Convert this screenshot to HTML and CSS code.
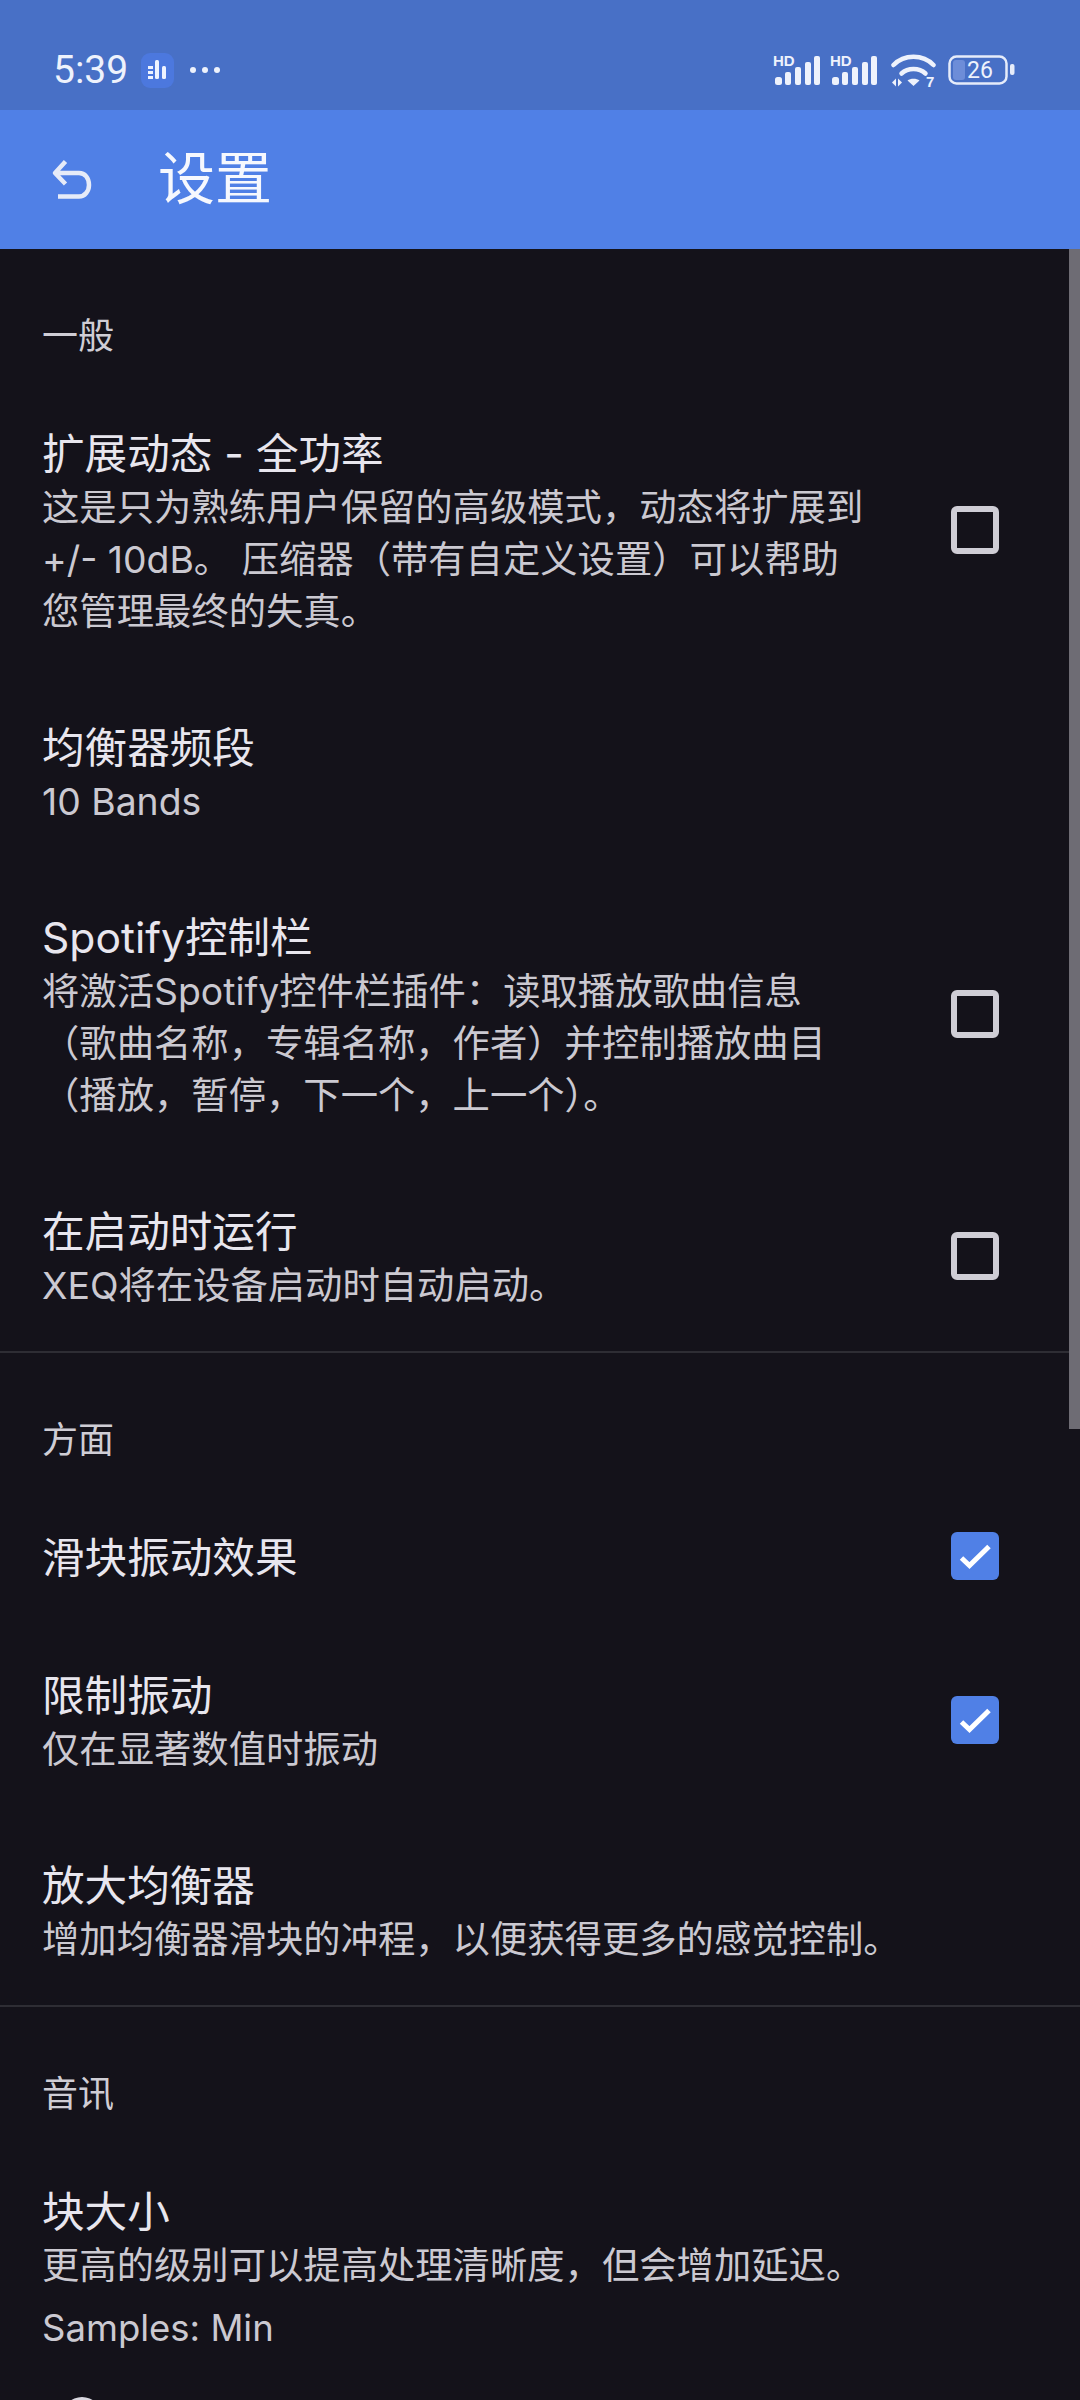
FILE: index.html
```html
<!DOCTYPE html>
<html lang="zh-CN">
<head>
<meta charset="utf-8">
<title>设置</title>
<link rel="stylesheet" href="styles.css">
</head>
<body>
<div class="screen">
  <div class="statusbar">
    <div class="status-left">
      <span class="time">5:39</span>
      <span class="chip">
        <svg width="19" height="21" viewBox="0 0 19 21"><g fill="#eef3ff"><rect x="0" y="6" width="5" height="3"/><rect x="0" y="11" width="5" height="3"/><rect x="0" y="16" width="5" height="3"/><rect x="7" y="0" width="4" height="19" rx="1.5"/><rect x="14" y="6" width="4" height="13" rx="1.5"/></g></svg>
      </span>
      <span class="dots"><i></i><i></i><i></i></span>
    </div>
    <div class="status-right">
      <svg class="signal" width="48" height="36" viewBox="0 -4 48 36"><text x="0" y="11.500" class="hd">HD</text><g fill="#eef2fc"><rect x="2" y="23" width="7" height="8" rx="2.500"/><rect x="12" y="18" width="6" height="13" rx="2"/><rect x="22" y="13" width="6" height="18" rx="2"/><rect x="32" y="8" width="6" height="23" rx="2"/><rect x="41" y="2" width="6" height="29" rx="2"/></g></svg>
      <svg class="signal" width="48" height="36" viewBox="0 -4 48 36"><text x="0" y="11.500" class="hd">HD</text><g fill="#eef2fc"><rect x="2" y="23" width="7" height="8" rx="2.500"/><rect x="12" y="18" width="6" height="13" rx="2"/><rect x="22" y="13" width="6" height="18" rx="2"/><rect x="32" y="8" width="6" height="23" rx="2"/><rect x="41" y="2" width="6" height="29" rx="2"/></g></svg>
      <svg class="wifi" width="46" height="38" viewBox="0 0 46 38"><g fill="none" stroke="#eef2fc" stroke-width="4.500" stroke-linecap="round"><path d="M2.500 11C13 0 32 0 42.500 11"/><path d="M10.500 19.500C17 13.500 28 13.500 34.500 19.500"/></g><path d="M16.500 26.500C19.500 24 25.500 24 28.500 26.500L22.500 32Z" fill="#eef2fc"/><path d="M1 28.500 5 24.500V32.500ZM7 32.500V24.500L11 28.500Z" fill="#eef2fc"/><text x="35" y="33" class="seven">7</text></svg>
      <svg class="battery" width="67" height="30" viewBox="0 0 67 30"><rect x="1.500" y="1.500" width="57" height="27" rx="7" fill="none" stroke="#e6ecfa" stroke-width="2.500"/><rect x="5" y="5" width="12" height="20" rx="3" fill="#6d8dd8"/><rect x="62" y="9" width="4.500" height="11" rx="2" fill="#e6ecfa"/><text x="19" y="23" class="batt">26</text></svg>
    </div>
  </div>
  <header class="appbar">
    <svg class="back" width="42" height="44" viewBox="0 0 42 44"><path d="M6 16H29C35 16 39 21 39 28C39 34 35 39.500 29 39.500H8M15.500 4.500 5 16 15.500 27" fill="none" stroke="#e6ebf8" stroke-width="4.500" stroke-linejoin="round"/></svg>
    <h1 class="page-title">设置</h1>
  </header>
  <main class="list">
    <section class="group">
      <h2 class="group-head">一般</h2>
      <div class="row">
        <div class="row-text">
          <div class="row-title">扩展动态 - 全功率</div>
          <div class="row-desc">这是只为熟练用户保留的高级模式，动态将扩展到 +/- 10dB。 压缩器（带有自定义设置）可以帮助您管理最终的失真。</div>
        </div>
        <span class="check"></span>
      </div>
      <div class="row">
        <div class="row-text">
          <div class="row-title">均衡器频段</div>
          <div class="row-desc">10 Bands</div>
        </div>
      </div>
      <div class="row">
        <div class="row-text">
          <div class="row-title">Spotify控制栏</div>
          <div class="row-desc">将激活Spotify控件栏插件：读取播放歌曲信息（歌曲名称，专辑名称，作者）并控制播放曲目（播放，暂停，下一个，上一个）。</div>
        </div>
        <span class="check"></span>
      </div>
      <div class="row">
        <div class="row-text">
          <div class="row-title">在启动时运行</div>
          <div class="row-desc">XEQ将在设备启动时自动启动。</div>
        </div>
        <span class="check"></span>
      </div>
    </section>
    <section class="group">
      <h2 class="group-head">方面</h2>
      <div class="row">
        <div class="row-text">
          <div class="row-title">滑块振动效果</div>
        </div>
        <span class="check checked"><svg width="48" height="48" viewBox="0 0 48 48"><path d="M10.500 26 18.500 33.500 38 14.500" fill="none" stroke="#fff" stroke-width="5"/></svg></span>
      </div>
      <div class="row">
        <div class="row-text">
          <div class="row-title">限制振动</div>
          <div class="row-desc">仅在显著数值时振动</div>
        </div>
        <span class="check checked"><svg width="48" height="48" viewBox="0 0 48 48"><path d="M10.500 26 18.500 33.500 38 14.500" fill="none" stroke="#fff" stroke-width="5"/></svg></span>
      </div>
      <div class="row">
        <div class="row-text">
          <div class="row-title">放大均衡器</div>
          <div class="row-desc">增加均衡器滑块的冲程，以便获得更多的感觉控制。</div>
        </div>
      </div>
    </section>
    <section class="group">
      <h2 class="group-head">音讯</h2>
      <div class="row">
        <div class="row-text">
          <div class="row-title">块大小</div>
          <div class="row-desc">更高的级别可以提高处理清晰度，但会增加延迟。</div>
          <div class="row-value">Samples: Min</div>
          <div class="slider-thumb"></div>
        </div>
      </div>
    </section>
  </main>
  <div class="scrollbar"></div>
</div>
</body>
</html>
```
FILE: styles.css
```css
* { box-sizing: border-box; }
html, body { margin: 0; padding: 0; background: #14121a; }
.screen {
  position: relative;
  width: 1080px;
  height: 2400px;
  overflow: hidden;
  font-family: Inter, "Noto Sans CJK SC", sans-serif;
  color: #e4e2ea;
  background: #14121a;
}
.statusbar {
  height: 110px;
  background: #4870c6;
  display: flex;
  align-items: center;
  justify-content: space-between;
  padding: 30px 65px 0 53px;
}
.status-left { display: flex; align-items: center; }
.time { font-family: Roboto, sans-serif; font-size: 39px; color: #eef2fc; width: 88px; }
.chip {
  width: 33px; height: 35px; border-radius: 9px; background: #4c78de;
  display: flex; align-items: center; justify-content: center; margin-top: 1px;
}
.dots { display: flex; gap: 6px; margin-left: 16px; }
.dots i { width: 6px; height: 6px; border-radius: 50%; background: #eef2fc; }
.status-right { display: flex; align-items: center; gap: 9px; }
.signal { margin-bottom: 4px; }
.wifi { margin: 6px 0 0 4px; }
.battery { margin-left: 2px; }
.hd { font-family: "Liberation Sans", sans-serif; font-weight: 700; font-size: 15px; fill: #eef2fc; }
.seven { font-family: "Liberation Sans", sans-serif; font-weight: 700; font-size: 15px; fill: #eef2fc; }
.batt { font-family: Roboto, sans-serif; font-size: 23px; fill: #eef2fc; }
.appbar {
  height: 139px;
  background: #5080e6;
  display: flex;
  align-items: center;
  gap: 66px;
  padding-left: 50px;
}
.back { flex: none; margin-top: -2px; }
.page-title { margin: 0; font-size: 57px; font-weight: 400; color: #f6f8fe; line-height: 1.2; }
.group + .group { border-top: 2px solid #2e2d34; }
.group-head {
  margin: 0;
  padding: 62px 0 22px 42px;
  font-size: 36px;
  line-height: 50px;
  font-weight: 400;
  color: #cfcdd5;
}
.row {
  display: flex;
  align-items: center;
  padding: 39px 81px 39px 42px;
  gap: 81px;
}
.row-text { flex: 1; min-width: 0; }
.row-title { font-size: 42.6px; line-height: 56px; padding-top: 4px; font-weight: 400; color: #e8e6ee; }
.row-desc { font-size: 37.35px; line-height: 52px; color: #cbc9d1; }
.row-value { font-size: 36.5px; line-height: 52px; margin-top: 10px; color: #cbc9d1; }
.slider-thumb {
  width: 40px;
  height: 40px;
  margin: 43px 0 0 20px;
  border-radius: 50%;
  background: #d9d7df;
}
.check {
  flex: none;
  width: 48px;
  height: 48px;
  border: 6px solid #cfcdd5;
  border-radius: 6px;
}
.check.checked { border: 0; background: #5080e6; }
.check svg { display: block; }
.scrollbar {
  position: absolute;
  top: 249px;
  right: 0;
  width: 11px;
  height: 1180px;
  background: #6e6c74;
}
```
